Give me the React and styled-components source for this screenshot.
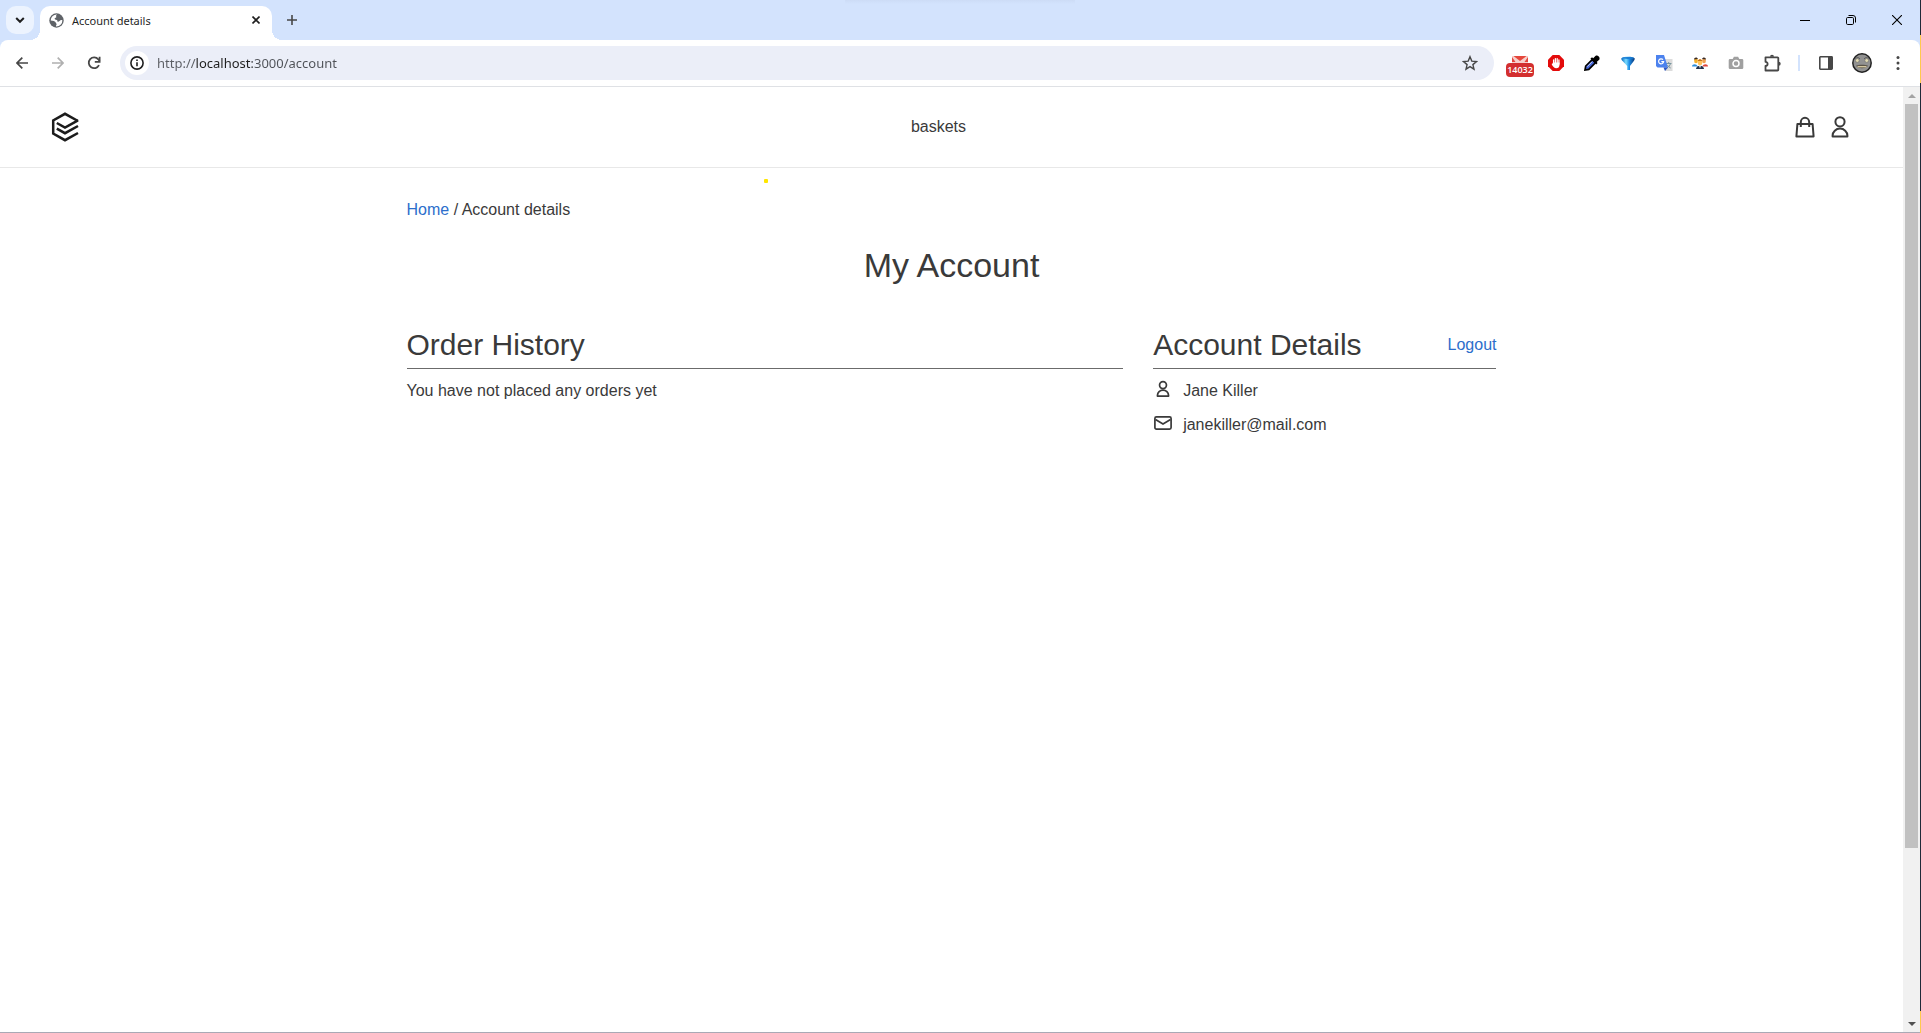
import React from "react";
import styled, { createGlobalStyle } from "styled-components";

const Global = createGlobalStyle`
  *, *::before, *::after { box-sizing: border-box; }
  body {
    margin: 0;
    background: #fff;
    color: #3a3a3a;
    font: 16px/22px "Liberation Sans", Arial, sans-serif;
  }
  h1, h2, p, ul { margin: 0; padding: 0; font-weight: 400; }
  ul { list-style: none; }
  button { border: 0; padding: 0; background: none; color: inherit; font: inherit; }
  a { text-decoration: none; }
  svg { display: block; }
`;

/* ---------- browser window ---------- */

const Desktop = styled.div`
  display: flex;
  min-height: 100vh;
`;

const Browser = styled.div`
  flex: 1;
  min-width: 0;
  display: flex;
  flex-direction: column;
  background: #d3e3fd;
  border-bottom: 1px solid #a9a9b5;
`;

const DesktopEdge = styled.div`
  width: 1px;
  background: linear-gradient(#1f2937 35px, #ffc94d 35px 83px, #1f2937 83px calc(100% - 22px), #ffc94d calc(100% - 22px));
`;

const TabStrip = styled.div`
  position: relative;
  display: flex;
  height: 40px;
  padding: 6px 0 0 6px;
`;

const TopShade = styled.div`
  position: absolute;
  top: 0;
  left: 44%;
  width: 12%;
  height: 4px;
  background: linear-gradient(#cddcf6, #d3e3fd);
`;

const TabSearch = styled.button`
  display: grid;
  place-items: center;
  width: 28px;
  height: 28px;
  border-radius: 10px;
  background: #ecf3fe;
  color: #1f1f1f;
`;

const Tab = styled.div`
  position: relative;
  display: flex;
  align-items: center;
  gap: 8px;
  width: 232px;
  height: 34px;
  margin-left: 6px;
  padding: 0 8px 6px 9px;
  border-radius: 10px 10px 0 0;
  background: #fff;
  color: #1f1f1f;

  &::before, &::after {
    content: "";
    position: absolute;
    bottom: 0;
    width: 10px;
    height: 10px;
  }
  &::before {
    right: 100%;
    background: radial-gradient(circle at 0 0, transparent 10px, #fff 10px);
  }
  &::after {
    left: 100%;
    background: radial-gradient(circle at 100% 0, transparent 10px, #fff 10px);
  }
`;

const TabTitle = styled.span`
  flex: 1;
  padding-top: 1px;
  font: 11px/16px "Noto Sans", "Open Sans", sans-serif;
`;

const StripButton = styled.button`
  display: grid;
  place-items: center;
  width: ${(p) => p.$width}px;
  height: 28px;
  color: ${(p) => p.$color || "#000"};
`;

const NewTab = styled(StripButton)`
  margin-left: 6px;
`;

const WindowControls = styled.div`
  display: flex;
  margin-left: auto;
`;

const Toolbar = styled.div`
  display: flex;
  align-items: center;
  height: 47px;
  padding: 0 4px;
  border-bottom: 1px solid #dfe1e5;
  border-radius: 8px 8px 0 0;
  background: #fff;
`;

const ToolButton = styled.button`
  position: relative;
  display: grid;
  place-items: center;
  flex: none;
  width: 36px;
  height: 34px;
  color: ${(p) => p.$color || "#474747"};
`;

const Omnibox = styled.label`
  flex: 1;
  display: flex;
  align-items: center;
  height: 34px;
  margin: 0 8px;
  padding-left: 5px;
  padding-right: 6px;
  border-radius: 17px;
  background: #ebeef8;
`;

const SiteInfo = styled.span`
  display: grid;
  place-items: center;
  width: 24px;
  height: 24px;
  border-radius: 50%;
  background: #fff;
  color: #1f1f1f;
`;

const Url = styled.input`
  flex: 1;
  min-width: 0;
  margin-left: 8px;
  padding: 0;
  border: 0;
  outline: 0;
  color: transparent;
  background: linear-gradient(90deg, #5a5d63 39px, #1f1f1f 39px 95px, #4e5157 95px);
  -webkit-background-clip: text;
  background-clip: text;
  font: 13px/20px "Noto Sans", "Open Sans", sans-serif;
`;

const Badge = styled.span`
  position: absolute;
  left: 4px;
  top: 17px;
  width: 28px;
  height: 14px;
  border-radius: 4px;
  background: #d32f2f;
  color: #fff;
  font: 600 9px/14px "Open Sans", sans-serif;
  text-align: center;
`;

const Divider = styled.div`
  width: 2px;
  height: 16px;
  margin: 0 8px;
  background: #d3e3fd;
`;

const Viewport = styled.div`
  flex: 1;
  display: flex;
  background: #fff;
`;

const ScrollBar = styled.div`
  display: flex;
  flex-direction: column;
  width: 17px;
  background: #f1f1f1;
`;

const ScrollArrow = styled.button`
  display: grid;
  place-items: center;
  height: 17px;
  color: ${(p) => p.$color};
`;

const ScrollTrack = styled.div`
  flex: 1;
  display: grid;
  grid-template-rows: 49fr 11fr;
  padding: 0 2px;
`;

const ScrollThumb = styled.div`
  background: #c1c1c1;
`;

/* ---------- site ---------- */

const Site = styled.div`
  position: relative;
  flex: 1;
  min-width: 0;
`;

const Marker = styled.span`
  position: absolute;
  left: 764px;
  top: 92px;
  width: 4px;
  height: 4px;
  border-radius: 1px;
  background: #ffe600;
`;

const Header = styled.header`
  display: flex;
  align-items: center;
  justify-content: space-between;
  height: 81px;
  padding: 0 51px 0 50px;
  border-bottom: 1px solid #e8e8e8;
`;

const SiteLink = styled.a`
  color: ${(p) => (p.$accent ? "#2c6ecb" : "inherit")};
`;

const HeaderIcons = styled.nav`
  display: flex;
  gap: 11px;
`;

const Container = styled.main`
  max-width: 1150px;
  margin: 0 auto;
  padding: 31px 30px;
`;

const PageTitle = styled.h1`
  margin: 24px 0 40px;
  font-size: 34px;
  line-height: 40px;
  text-align: center;
`;

const Columns = styled.div`
  display: grid;
  grid-template-columns: repeat(12, minmax(0, 1fr));
  column-gap: 30px;
`;

const Panel = styled.section`
  grid-column: span ${(p) => p.$span};
`;

const PanelHead = styled.div`
  display: flex;
  align-items: center;
  justify-content: space-between;
  margin-bottom: 11px;
  padding-bottom: 3px;
  border-bottom: 1px solid #6b6b6b;
`;

const PanelTitle = styled.h2`
  font-size: 30px;
  line-height: 40px;
`;

const Details = styled.ul`
  display: grid;
  gap: 12px;
`;

const Detail = styled.li`
  display: flex;
  gap: 10px;
`;

const DetailIcon = styled.span`
  display: grid;
  place-items: center;
  width: 20px;
  height: 18px;
`;

/* ---------- icons ---------- */

const Line = ({ size = 20, w = 2, box = 20, children }) => (
  <svg width={size} height={size} viewBox={`0 0 ${box} ${box}`} fill="none" stroke="currentColor" strokeWidth={w} aria-hidden="true">
    {children}
  </svg>
);

const PersonShape = () => (
  <>
    <circle cx="12" cy="6.8" r="4.6" />
    <path d="M4.600 21.400v-.8a7.400 7 0 0 1 14.800 0v.8z" strokeLinejoin="round" />
  </>
);

const Logo = () => (
  <svg width="34" height="32" viewBox="0 0 34 32" fill="none" stroke="#1c1c1c" strokeWidth="2.500" aria-hidden="true">
    <path d="M28 10 15 2.800 3.200 9.400v13.200L15 29.200 28 22" />
    <path d="M6.800 12 15 16.600 28 9.400" />
    <path d="M6.800 17.600 15 22.200 28 15" />
  </svg>
);

const Globe = () => (
  <svg width="15" height="15" viewBox="0 0 15 15" aria-hidden="true">
    <circle cx="7.5" cy="7.5" r="7.2" fill="#5f6368" />
    <path d="M8.2 1.6c-1 .6-1.4 1.2-1 2 .5.8-.4 1.2-1.2 1.5-.8.4-.2 1.6.9 1.6 1.3 0 1.6.9 1.5 1.7.8.5 2 .2 2.4-.6.4-.7 1.2-.8 2.6-.6A6 6 0 0 1 7 13.4c-.2-1 .6-1.4.6-2.2 0-.9-1-1-1-2C6.300 8.200 4 7.600 1.700 7.400a6 6 0 0 1 6.500-5.800z" fill="#fff" />
    <path d="M8.8 1.8c.4.8 1.600 1 2.600 1.200" stroke="#5f6368" fill="none" />
  </svg>
);

const Mail = () => (
  <svg width="16" height="18" viewBox="0 0 16 18" aria-hidden="true">
    <path d="M0 2h16v10H0z" fill="#f7d0cc" />
    <path d="M1.500 2h13L8 7z" fill="#e5473c" />
    <path d="M0 3l3.500 5H0zM16 3l-3.500 5H16z" fill="#e5473c" />
  </svg>
);

const Blocker = () => (
  <svg width="16" height="16" viewBox="0 0 16 16" aria-hidden="true">
    <path d="M4.700 0h6.600L16 4.700v6.600L11.300 16H4.700L0 11.300V4.700z" fill="#e30b0b" />
    <path d="M5.600 5v4M7.400 3.600V8M9.200 3.600V8M10.900 5v4" stroke="#fff" strokeWidth="1.300" strokeLinecap="round" />
    <path d="M5 7.500h6.500v2.400c0 2-1.300 3.300-3.200 3.300S4.600 11.500 3.600 9l1-.4z" fill="#fff" />
  </svg>
);

const Dropper = () => (
  <svg width="16" height="16" viewBox="0 0 16 16" aria-hidden="true">
    <path d="M8.200 4.600 1.700 11.200 1 15l3.800-.6 6.800-6.800z" fill="#4667d8" stroke="#000" strokeWidth="1.700" />
    <path d="M3.200 11.600l5-5" stroke="#cfd8ff" />
    <path d="M6.400 3.800 12.200 9.600l1.400-1.500-.9-1.200 2.500-2.200C16.700 2.400 13.600-.7 11.400 1L9.200 3.200l-1.200-.9z" fill="#000" />
  </svg>
);

const Funnel = () => (
  <svg width="16" height="16" viewBox="0 0 16 16" aria-hidden="true">
    <defs>
      <linearGradient id="funnel">
        <stop offset="0.05" stopColor="#1273c4" />
        <stop offset="0.35" stopColor="#7bdcff" />
        <stop offset="0.6" stopColor="#1d8de6" />
        <stop offset="1" stopColor="#0a3575" />
      </linearGradient>
    </defs>
    <path d="M1.200 3.500C2.500 1 13.500 1 14.800 3.500c0 1.800-2 3.600-4.800 7.500V15H7.200v-4C4.200 7.100 1.200 5.300 1.200 3.500z" fill="url(#funnel)" />
    <ellipse cx="8" cy="2.900" rx="5.800" ry="1" fill="#1b7fd6" />
  </svg>
);

const Translate = () => (
  <svg width="17" height="17" viewBox="0 0 17 17" aria-hidden="true">
    <path d="M6 4h10.500v12H9z" fill="#dcdcdc" />
    <path d="M10 8.500h5.500M12.700 7v1.500M14.500 8.500c-.5 2-2 3.500-3.500 4.500M11.300 10c.8 1.300 2 2.300 3.400 3" stroke="#7896a0" fill="none" />
    <path d="M0 0h8l4 12.500H1.500L0 11z" fill="#4c82ee" />
    <path d="M7.500 12.500H12L9 16z" fill="#2a56c6" />
    <path d="M7 4.700a2.500 2.500 0 1 0 .6 2H5.300" stroke="#fff" strokeWidth="1.200" fill="none" />
  </svg>
);

const People = () => (
  <svg width="16" height="14" viewBox="0 0 16 14" aria-hidden="true">
    <path d="M0 10.500c0-3 5-3 5.500 0z" fill="#2d8fe0" />
    <path d="M10.500 10.500c.500-3 5.500-3 5.500 0z" fill="#e0473c" />
    <path d="M4 13c0-4.500 8-4.500 8 0z" fill="#20304c" />
    <ellipse cx="4" cy="4.800" rx="1.900" ry="2.500" fill="#f5b02a" />
    <ellipse cx="12" cy="4.800" rx="1.900" ry="2.500" fill="#f0a050" />
    <ellipse cx="8" cy="6.500" rx="2.200" ry="3" fill="#ffc35c" />
    <path d="M2 3.600C2 .8 5.500.8 6 3zM10 3c.5-2.200 4-2.200 4 .6z" fill="#3a2a22" />
    <path d="M5.800 5c.4-2.500 4-2.500 4.400 0z" fill="#c4701b" />
    <path d="M7 9.500h2l-1 3z" fill="#fff" />
  </svg>
);

const Camera = () => (
  <svg width="16" height="16" viewBox="0 0 16 16" aria-hidden="true">
    <path d="M2 4h2.700l1.200-2.300h4.200L11.300 4H14a1.300 1.300 0 0 1 1.300 1.300v7.400A1.300 1.300 0 0 1 14 14H2a1.300 1.300 0 0 1-1.300-1.300V5.300A1.300 1.300 0 0 1 2 4z" fill="#a0a0a0" />
    <circle cx="8" cy="8.600" r="3" fill="#a0a0a0" stroke="#fff" strokeWidth="1.500" />
  </svg>
);

const Puzzle = () => (
  <svg width="18" height="18" viewBox="0 0 18 18" aria-hidden="true">
    <path d="M2.500 3.300h12a.8.800 0 0 1 .8.800v11.600a.8.800 0 0 1-.8.800h-12v-4.500c2.800-.3 2.800-3.900 0-4.200z" fill="none" stroke="#474747" strokeWidth="1.800" strokeLinejoin="round" />
    <path d="M7 2.800a2 2 0 0 1 4 0zM15.700 7.800a2 2 0 0 1 0 4z" fill="#474747" />
  </svg>
);

const Avatar = () => (
  <svg width="20" height="20" viewBox="0 0 20 20" aria-hidden="true">
    <circle cx="10" cy="10" r="9.200" fill="#929292" stroke="#222" strokeWidth="1.500" />
    <path d="M3.500 5.500c2-1.500 3.500-1 4.500.5M12 6c1-1.500 3-2 4.500-.5" stroke="#5a5a5a" fill="none" />
    <circle cx="5.300" cy="7.500" r="1.900" fill="#e4dcb2" stroke="#666" strokeWidth="0.600" />
    <circle cx="14.700" cy="7.500" r="1.900" fill="#e4dcb2" stroke="#666" strokeWidth="0.600" />
    <path d="M4 12.800c3-1.300 9-1.300 12 0-2 3.200-10 3.200-12 0z" fill="#5b5548" />
    <path d="M5.500 13.700h9" stroke="#d5c7a0" strokeWidth="1.400" />
  </svg>
);

export default function App() {
  return (
    <>
      <Global />
      <Desktop>
        <Browser>
          <TabStrip>
            <TopShade />
            <TabSearch aria-label="Search tabs">
              <Line size={10} box={10}><path d="M1.200 3 5 6.800 8.800 3" /></Line>
            </TabSearch>
            <Tab>
              <Globe />
              <TabTitle>Account details</TabTitle>
              <StripButton $width={16} $color="#1f1f1f" aria-label="Close tab">
                <Line size={8} box={8} w={1.6}><path d="M.5.5l7 7M7.500.500l-7 7" /></Line>
              </StripButton>
            </Tab>
            <NewTab $width={28} $color="#474747" aria-label="New tab">
              <Line size={10} box={10} w={1.6}><path d="M5 0v10M0 5h10" /></Line>
            </NewTab>
            <WindowControls>
              <StripButton $width={46} aria-label="Minimize">
                <Line size={10} box={10} w={1}><path d="M0 5.500h10" /></Line>
              </StripButton>
              <StripButton $width={46} aria-label="Restore">
                <Line size={10} box={10} w={1}>
                  <rect x="0.500" y="2.500" width="7" height="7" rx="1.200" />
                  <path d="M2.500.5h4.500a2.500 2.500 0 0 1 2.500 2.500v4.500" />
                </Line>
              </StripButton>
              <StripButton $width={46} aria-label="Close">
                <Line size={10} box={10} w={1.1}><path d="M0 0l10 10M10 0 0 10" /></Line>
              </StripButton>
            </WindowControls>
          </TabStrip>

          <Toolbar>
            <ToolButton aria-label="Back">
              <Line size={12} box={12} w={1.7}><path d="M12 6H1.200M6.300.700 1 6l5.300 5.300" /></Line>
            </ToolButton>
            <ToolButton aria-label="Forward" $color="#b0b0b0">
              <Line size={12} box={12} w={1.7}><path d="M0 6h10.800M5.700.700 11 6l-5.300 5.300" /></Line>
            </ToolButton>
            <ToolButton aria-label="Reload">
              <Line size={14} box={14} w={1.8}><path d="M12 9.200A5.400 5.400 0 1 1 11.300 3.300L12.600 5" /><path d="M12.600.800v5H7.800" /></Line>
            </ToolButton>
            <Omnibox>
              <SiteInfo>
                <Line size={14} box={14} w={1.6}><circle cx="7" cy="7" r="6.100" /><path d="M7 6.200v4M7 3.400v1.700" /></Line>
              </SiteInfo>
              <Url aria-label="Address" defaultValue="http://localhost:3000/account" />
              <ToolButton as="span">
                <Line size={16} box={16} w={1.4}><path d="M8 1.700l1.800 4.400 4.700.400-3.600 3.100 1.100 4.600L8 11.700l-4 2.500 1.100-4.600L1.500 6.500l4.700-.4z" /></Line>
              </ToolButton>
            </Omnibox>
            <ToolButton aria-label="Unread mail"><Mail /><Badge>14032</Badge></ToolButton>
            <ToolButton aria-label="Ad blocker"><Blocker /></ToolButton>
            <ToolButton aria-label="Color picker"><Dropper /></ToolButton>
            <ToolButton aria-label="Filter"><Funnel /></ToolButton>
            <ToolButton aria-label="Translate"><Translate /></ToolButton>
            <ToolButton aria-label="People"><People /></ToolButton>
            <ToolButton aria-label="Capture"><Camera /></ToolButton>
            <ToolButton aria-label="Extensions"><Puzzle /></ToolButton>
            <Divider />
            <ToolButton aria-label="Side panel">
              <Line size={14} box={14} w={1.6}><rect x="0.800" y="0.800" width="12.400" height="12.400" rx="0.600" /><path d="M9 1h4v12H9z" fill="currentColor" stroke="none" /></Line>
            </ToolButton>
            <ToolButton aria-label="Profile"><Avatar /></ToolButton>
            <ToolButton aria-label="Menu">
              <svg width="4" height="14" viewBox="0 0 4 14" fill="currentColor" aria-hidden="true">
                <circle cx="2" cy="1.600" r="1.500" /><circle cx="2" cy="7" r="1.500" /><circle cx="2" cy="12.400" r="1.500" />
              </svg>
            </ToolButton>
          </Toolbar>

          <Viewport>
            <Site>
              <Marker />
              <Header>
                <SiteLink href="#" aria-label="Home page"><Logo /></SiteLink>
                <SiteLink href="#">baskets</SiteLink>
                <HeaderIcons>
                  <SiteLink href="#" aria-label="Cart">
                    <Line size={24} box={24} w={2}>
                      <path d="M4.400 9h15.200l1 12.400H3.400z" strokeLinejoin="round" />
                      <path d="M7.800 12V7.200a4.200 4.400 0 0 1 8.400 0V12" />
                    </Line>
                  </SiteLink>
                  <SiteLink href="#" aria-label="Account">
                    <Line size={24} box={24} w={2}><PersonShape /></Line>
                  </SiteLink>
                </HeaderIcons>
              </Header>
              <Container>
                <nav aria-label="Breadcrumb">
                  <SiteLink $accent href="#">Home</SiteLink> / Account details
                </nav>
                <PageTitle>My Account</PageTitle>
                <Columns>
                  <Panel $span={8}>
                    <PanelHead><PanelTitle>Order History</PanelTitle></PanelHead>
                    <p>You have not placed any orders yet</p>
                  </Panel>
                  <Panel $span={4}>
                    <PanelHead>
                      <PanelTitle>Account Details</PanelTitle>
                      <SiteLink $accent href="#">Logout</SiteLink>
                    </PanelHead>
                    <Details>
                      <Detail>
                        <DetailIcon>
                          <Line size={18} box={24} w={2.3}><PersonShape /></Line>
                        </DetailIcon>
                        Jane Killer
                      </Detail>
                      <Detail>
                        <DetailIcon>
                          <Line size={18} box={18} w={1.7}>
                            <rect x="0.900" y="2.900" width="16.200" height="12.200" rx="1.500" />
                            <path d="M1.500 5.500 9 10l7.500-4.500" />
                          </Line>
                        </DetailIcon>
                        janekiller@mail.com
                      </Detail>
                    </Details>
                  </Panel>
                </Columns>
              </Container>
            </Site>
            <ScrollBar>
              <ScrollArrow $color="#a3a3a3" aria-label="Scroll up">
                <svg width="8" height="4" viewBox="0 0 8 4" aria-hidden="true"><path d="M4 0l4 4H0z" fill="currentColor" /></svg>
              </ScrollArrow>
              <ScrollTrack><ScrollThumb /></ScrollTrack>
              <ScrollArrow $color="#505050" aria-label="Scroll down">
                <svg width="8" height="4" viewBox="0 0 8 4" aria-hidden="true"><path d="M0 0h8L4 4z" fill="currentColor" /></svg>
              </ScrollArrow>
            </ScrollBar>
          </Viewport>
        </Browser>
        <DesktopEdge />
      </Desktop>
    </>
  );
}
